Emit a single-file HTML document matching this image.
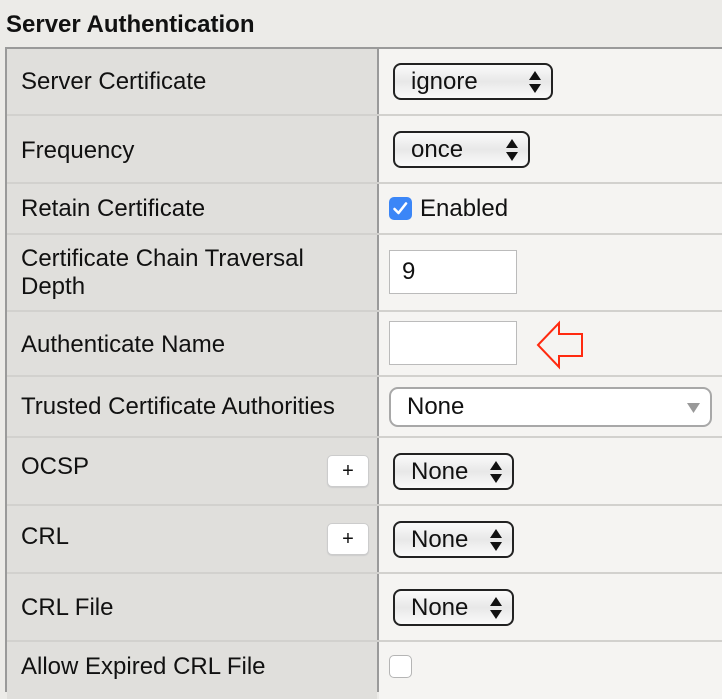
<!DOCTYPE html>
<html><head><meta charset="utf-8"><style>
*{margin:0;padding:0;box-sizing:border-box}
body{width:722px;height:692px;background:#ecebe8;font-family:"Liberation Sans",Arial,sans-serif;position:relative;overflow:hidden;color:#111}
.a{position:absolute}
h1{position:absolute;left:6px;top:11px;font-size:24px;font-weight:bold;color:#111}
.left{left:7px;top:49px;width:370px;height:650px;background:#e0dfdc}
.right{left:379px;top:49px;width:343px;height:650px;background:#f5f4f2}
.hl{left:7px;width:715px;height:2px;background:#d2d1ce}
.lab{left:21px;font-size:24px;line-height:28px;color:#111}
.sel{border:2px solid #222;border-radius:8px;background:linear-gradient(#fafafa,#e8e8e8 50%,#fafafa);font-size:24px;padding-left:16px;line-height:33px}
.arr{position:absolute;right:10px;top:6px;width:12px;height:22px}
.inp{background:#fff;border:1px solid #bbb;font-size:24px;padding-left:12px}
.plus{background:#fff;border:1px solid #ccc;border-radius:5px;font-size:20px;text-align:center;line-height:30px;box-shadow:0 1px 1px #ccc}
</style></head><body>
<h1>Server Authentication</h1>
<div class="a" style="left:5px;top:47px;width:717px;height:2px;background:#9a9a9a"></div>
<div class="a" style="left:5px;top:47px;width:2px;height:645px;background:#9a9a9a"></div>
<div class="a left"></div>
<div class="a right"></div>
<div class="a" style="left:377px;top:49px;width:2px;height:643px;background:#9a9a9a"></div>
<div class="a hl" style="top:114px"></div>
<div class="a hl" style="top:182px"></div>
<div class="a hl" style="top:233px"></div>
<div class="a hl" style="top:310px"></div>
<div class="a hl" style="top:375px"></div>
<div class="a hl" style="top:436px"></div>
<div class="a hl" style="top:504px"></div>
<div class="a hl" style="top:572px"></div>
<div class="a hl" style="top:640px"></div>

<div class="a lab" style="top:68px">Server Certificate</div>
<div class="a lab" style="top:137px">Frequency</div>
<div class="a lab" style="top:195px">Retain Certificate</div>
<div class="a lab" style="top:245px">Certificate Chain Traversal<br>Depth</div>
<div class="a lab" style="top:331px">Authenticate Name</div>
<div class="a lab" style="top:393px">Trusted Certificate Authorities</div>
<div class="a lab" style="top:453px">OCSP</div>
<div class="a lab" style="top:523px">CRL</div>
<div class="a lab" style="top:594px">CRL File</div>
<div class="a lab" style="top:653px">Allow Expired CRL File</div>

<svg width="0" height="0" style="position:absolute"><defs><g id="ud"><path d="M6 0L12 9H0Z M0 13H12L6 22Z" fill="#111"/></g></defs></svg>

<div class="a sel" style="left:393px;top:63px;width:160px;height:37px">ignore<svg class="arr" viewBox="0 0 12 22"><use href="#ud"/></svg></div>
<div class="a sel" style="left:393px;top:131px;width:137px;height:37px">once<svg class="arr" viewBox="0 0 12 22"><use href="#ud"/></svg></div>

<div class="a" style="left:389px;top:197px;width:23px;height:23px;background:#3b86f7;border-radius:5px"><svg width="23" height="23" viewBox="0 0 23 23"><path d="M5.5 12L9.5 16L17 6.5" stroke="#fff" stroke-width="2.6" fill="none" stroke-linecap="round" stroke-linejoin="round"/></svg></div>
<div class="a" style="left:420px;top:195px;font-size:24px;line-height:28px">Enabled</div>

<div class="a inp" style="left:389px;top:250px;width:128px;height:44px;line-height:42px">9</div>
<div class="a inp" style="left:389px;top:321px;width:128px;height:44px"></div>
<svg class="a" style="left:535px;top:320px" width="50" height="50" viewBox="535 320 50 50"><path d="M538 345L559 323V334H582V356H559V367Z" fill="none" stroke="#ff2a10" stroke-width="2"/></svg>

<div class="a" style="left:389px;top:387px;width:323px;height:40px;border:2px solid #a8a8a8;border-radius:9px;background:#fff;font-size:24px;line-height:36px;padding-left:16px">None<svg style="position:absolute;right:10px;top:14px" width="13" height="10"><path d="M0 0H13L6.5 10Z" fill="#999"/></svg></div>

<div class="a plus" style="left:327px;top:455px;width:42px;height:32px">+</div>
<div class="a sel" style="left:393px;top:453px;width:121px;height:37px">None<svg class="arr" viewBox="0 0 12 22"><use href="#ud"/></svg></div>
<div class="a plus" style="left:327px;top:523px;width:42px;height:32px">+</div>
<div class="a sel" style="left:393px;top:521px;width:121px;height:37px">None<svg class="arr" viewBox="0 0 12 22"><use href="#ud"/></svg></div>
<div class="a sel" style="left:393px;top:589px;width:121px;height:37px">None<svg class="arr" viewBox="0 0 12 22"><use href="#ud"/></svg></div>

<div class="a" style="left:389px;top:655px;width:23px;height:23px;background:#fff;border:1px solid #b5b5b5;border-radius:5px"></div>
</body></html>
